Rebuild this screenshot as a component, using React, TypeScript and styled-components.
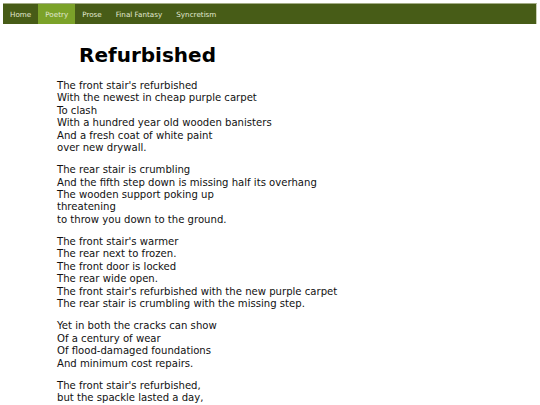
import styled, { createGlobalStyle } from "styled-components";

const GlobalStyle = createGlobalStyle`
  html, body {
    margin: 0;
    padding: 0;
    background: #ffffff;
  }
  body {
    padding: 3px;
    font-family: "DejaVu Sans", Verdana, sans-serif;
    color: #111111;
  }
`;

const NavBar = styled.nav`
  display: flex;
  height: 20px;
  background: #475c17;
  border-top: 1px solid #a3ad85;
  border-right: 1px solid #c9cfb4;
`;

const NavItem = styled.a<{ $active?: boolean }>`
  display: flex;
  align-items: center;
  padding: 0 7px;
  font-size: 7.2px;
  color: #e2e9d2;
  text-decoration: none;
  background: ${(p) => (p.$active ? "#7ba229" : "transparent")};
`;

const Page = styled.main`
  padding: 21px 0 0 54px;
`;

const Title = styled.h1`
  margin: 0 0 14px 22px;
  font-size: 20px;
  font-weight: bold;
  line-height: 21px;
  color: #000000;
`;

const Stanza = styled.p`
  margin: 0 0 9.8px 0;
  font-size: 10.1px;
  line-height: 12.4px;
`;

const poem: string[][] = [
  [
    "The front stair's refurbished",
    "With the newest in cheap purple carpet",
    "To clash",
    "With a hundred year old wooden banisters",
    "And a fresh coat of white paint",
    "over new drywall.",
  ],
  [
    "The rear stair is crumbling",
    "And the fifth step down is missing half its overhang",
    "The wooden support poking up",
    "threatening",
    "to throw you down to the ground.",
  ],
  [
    "The front stair's warmer",
    "The rear next to frozen.",
    "The front door is locked",
    "The rear wide open.",
    "The front stair's refurbished with the new purple carpet",
    "The rear stair is crumbling with the missing step.",
  ],
  [
    "Yet in both the cracks can show",
    "Of a century of wear",
    "Of flood-damaged foundations",
    "And minimum cost repairs.",
  ],
  ["The front stair's refurbished,", "but the spackle lasted a day,"],
];

const links = ["Home", "Poetry", "Prose", "Final Fantasy", "Syncretism"];

const App = () => {
  return (
    <>
      <GlobalStyle />
      <NavBar>
        {links.map((l) => (
          <NavItem key={l} href="#" $active={l === "Poetry"}>
            {l}
          </NavItem>
        ))}
      </NavBar>
      <Page>
        <Title>Refurbished</Title>
        {poem.map((stanza, i) => (
          <Stanza key={i}>
            {stanza.map((line, j) => (
              <span key={j}>
                {line}
                {j < stanza.length - 1 && <br />}
              </span>
            ))}
          </Stanza>
        ))}
      </Page>
    </>
  );
};

export default App;
